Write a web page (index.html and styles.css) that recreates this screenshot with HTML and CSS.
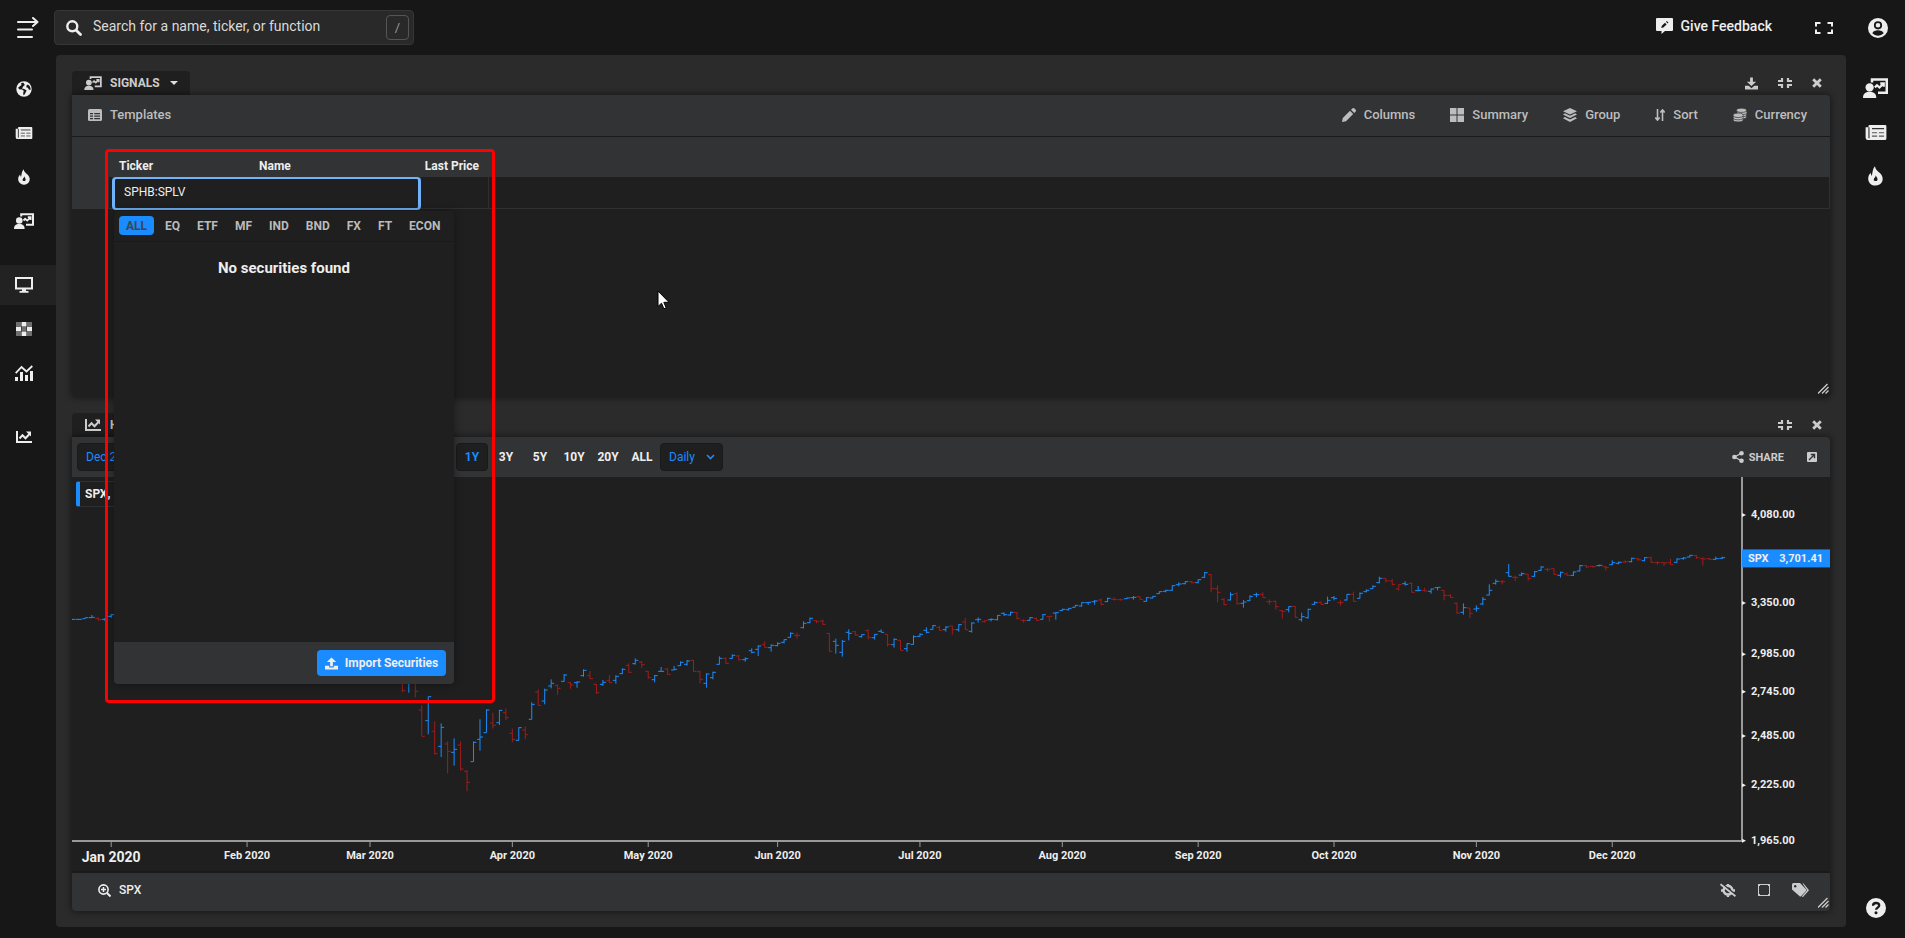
FILE: index.html
```html
<!DOCTYPE html>
<html lang="en">
<head>
    <meta charset="UTF-8">
    <meta name="viewport" content="width=device-width, initial-scale=1.0">
    <title>Signals</title>
    <link rel="stylesheet" href="styles.css">
</head>
<body>
    <svg class="sprite" aria-hidden="true">
        <symbol id="i-menu" viewBox="0 0 22 22">
            <path d="M1 5h18M1 12.500h14M1 20h14" fill="none" stroke="currentColor" stroke-width="2" stroke-linecap="round"/>
            <path d="M16 1l4.500 4L16 9" fill="none" stroke="currentColor" stroke-width="2" stroke-linecap="round" stroke-linejoin="round"/>
        </symbol>
        <symbol id="i-search" viewBox="0 0 16 16">
            <circle cx="6.300" cy="6.300" r="5" fill="none" stroke="currentColor" stroke-width="2.400"/>
            <path d="M10.200 10.200l4.300 4.300" stroke="currentColor" stroke-width="2.800" stroke-linecap="round"/>
        </symbol>
        <symbol id="i-globe" viewBox="0 0 16 16">
            <circle cx="8" cy="8" r="7.700" fill="currentColor"/>
            <path d="M7.200 1.400L4.800 2.600 5.600 4 4.200 5 2.200 6.400 3 8.200l3.200 .4 1.600 1.500-.6 1.600 .2 2.500 1.400-.9 1-2.300 .9-1.500-2.500-1.600-2.200-.5 1.300-2.100 1.600-1.300z" fill="#171717"/>
            <path d="M11.800 3.500l-1.500 1.300 .2 1.600 1.500 .3 .7 1.800 1.700 .5 .2-1.800-1-2.200z" fill="#171717"/>
        </symbol>
        <symbol id="i-news" viewBox="0 0 18 13">
            <path d="M3.500 0H17a1 1 0 0 1 1 1v11a1 1 0 0 1-1 1H2a2 2 0 0 1-2-2V2h2.500V1a1 1 0 0 1 1-1z" fill="currentColor"/>
            <path d="M2.900 2v9.500M5.500 3.200h10.500" stroke="#333" stroke-width="1" fill="none"/>
            <path d="M5.500 6.700h4.500M11.500 6.700h4.500M5.500 9.700h4.500M11.500 9.700h4.500" stroke="#555" stroke-width="1" fill="none"/>
        </symbol>
        <symbol id="i-flame" viewBox="0 0 14 18">
            <path d="M6.500 0c.4 3 2.600 4.500 4.800 6.500 3.500 3.300 3 8.300-.6 10.500-3.500 2-8.300 .8-9.900-2.700C-.6 11.200 .6 7.800 2.500 6c.1 1.500 .4 2.200 1.100 2.800C4.400 5.500 4.200 2.500 6.500 0z" fill="currentColor"/>
            <path d="M7.300 8.200c-.2 1.500-.9 2-1.500 2.800-.8 1-.5 2.400 .9 2.700 1.700 .3 2.700-1.200 2-2.700-.4-.9-1.100-1.600-1.400-2.800z" fill="#171717"/>
        </symbol>
        <symbol id="i-present" viewBox="0 0 20 16">
            <path d="M7.200 3.500V1.200H19v10.600h-7" fill="none" stroke="currentColor" stroke-width="2"/>
            <circle cx="5.300" cy="7.500" r="3.300" fill="currentColor"/>
            <path d="M0 16c0-3.200 1.600-5 5.300-5s5.300 1.800 5.300 5z" fill="currentColor"/>
            <path d="M9.500 7.500l1.700-1.700 2 1.800 3.200-3.200M13.800 4.200h2.800V7" fill="none" stroke="currentColor" stroke-width="1.800"/>
        </symbol>
        <symbol id="i-desktop" viewBox="0 0 18 16">
            <path d="M1 1h16v10.500H1z" fill="none" stroke="currentColor" stroke-width="2"/>
            <path d="M7 12h4v2h2.500v1.800h-9V14H7z" fill="currentColor"/>
        </symbol>
        <symbol id="i-grid" viewBox="0 0 16 14">
            <path d="M0 0h5v4.500H0zM11 0h5v4.500h-5zM0 9.500h5V14H0zM11 9.500h5V14h-5zM5.500 4.700h5v4.500h-5z" fill="#6f6f6f"/>
            <path d="M5.500 0h5v4.500h-5zM0 4.700h5v4.500H0zM11 4.700h5v4.500h-5zM5.500 9.500h5V14h-5z" fill="currentColor"/>
        </symbol>
        <symbol id="i-bars" viewBox="0 0 18 16">
            <path d="M0 12h3v4H0zM5 7h3v9H5zM10 10h3v6h-3zM15 6h3v10h-3z" fill="currentColor"/>
            <path d="M.7 8.200L6.500 2l5 4.500L17.300 1" fill="none" stroke="currentColor" stroke-width="1.800"/>
        </symbol>
        <symbol id="i-line" viewBox="0 0 16 12">
            <path d="M1 0v11h15" fill="none" stroke="currentColor" stroke-width="2"/>
            <path d="M3.500 7.500l3-3.200 3 3 4-4.300" fill="none" stroke="currentColor" stroke-width="2"/>
            <path d="M10 .6h5v5z" fill="currentColor"/>
        </symbol>
        <symbol id="i-feedback" viewBox="0 0 17 16">
            <path d="M1 0h15a1 1 0 0 1 1 1v11a1 1 0 0 1-1 1H9l-3.500 3v-3H1a1 1 0 0 1-1-1V1a1 1 0 0 1 1-1z" fill="currentColor"/>
            <path d="M5.300 10l.5-2.200 3.200-3 1.600 1.600-3.200 3zM10 3.800l.8-.8L12.400 4.600l-.8 .8z" fill="#171717"/>
        </symbol>
        <symbol id="i-expand" viewBox="0 0 18 12">
            <path d="M5.500 1H1v3.500M12.500 1H17v3.500M5.500 11H1V7.500M12.500 11H17V7.500" fill="none" stroke="currentColor" stroke-width="2"/>
        </symbol>
        <symbol id="i-user" viewBox="0 0 20 20">
            <circle cx="10" cy="10" r="10" fill="currentColor"/>
            <circle cx="10" cy="7.300" r="3.200" fill="none" stroke="#171717" stroke-width="1.800"/>
            <path d="M4.300 15.300c1-2.300 3-3 5.700-3s4.700 .7 5.700 3A7.700 7.700 0 0 1 10 17.700a7.700 7.700 0 0 1-5.700-2.400z" fill="#171717"/>
        </symbol>
        <symbol id="i-help" viewBox="0 0 20 20">
            <circle cx="10" cy="10" r="10" fill="currentColor"/>
            <path d="M7 7.700c0-1.600 1.200-2.700 3-2.700s3.200 1.100 3.200 2.600c0 2-3.100 2.100-3.100 4.200" fill="none" stroke="#171717" stroke-width="2.300"/>
            <circle cx="10" cy="14.800" r="1.500" fill="#171717"/>
        </symbol>
        <symbol id="i-download" viewBox="0 0 14 13">
            <path d="M5.500 0h3v4.500H12L7 9.300 2 4.500h3.500z" fill="currentColor"/>
            <path d="M0 9h4l3 2.500L10 9h4v4H0z" fill="currentColor"/>
        </symbol>
        <symbol id="i-upload" viewBox="0 0 14 13">
            <path d="M5.500 9.500h3V5H12L7 0 2 5h3.500z" fill="currentColor"/>
            <path d="M0 9h4.500v1.700h5V9H14v4H0z" fill="currentColor"/>
        </symbol>
        <symbol id="i-compress" viewBox="0 0 14 10">
            <path d="M4 0v3H0M10 0v3h4M4 10V7H0M10 10V7h4" fill="none" stroke="currentColor" stroke-width="2.200"/>
        </symbol>
        <symbol id="i-close" viewBox="0 0 10 10">
            <path d="M1.200 1.200l7.600 7.600M8.800 1.200L1.200 8.800" stroke="currentColor" stroke-width="2.800"/>
        </symbol>
        <symbol id="i-table" viewBox="0 0 14 12">
            <rect width="14" height="12" rx="1.500" fill="currentColor"/>
            <path d="M2 4h3v1.300H2zM6.200 4H12v1.300H6.200zM2 6.500h3v1.300H2zM6.200 6.500H12v1.300H6.200zM2 9h3v1.300H2zM6.200 9H12v1.300H6.200z" fill="#323335"/>
        </symbol>
        <symbol id="i-pencil" viewBox="0 0 14 14">
            <path d="M0 14l.8-4L8 2.800 11.200 6 4 13.200zM9 1.800L10.300 .5a1.500 1.500 0 0 1 2.100 0l1.100 1.100a1.500 1.500 0 0 1 0 2.100L12.200 5z" fill="currentColor"/>
        </symbol>
        <symbol id="i-blocks" viewBox="0 0 14 14">
            <path d="M0 0h6.500v6.500H0zM7.500 0H14v6.500H7.500zM0 7.500h6.500V14H0zM7.500 7.500H14V14H7.500z" fill="currentColor"/>
        </symbol>
        <symbol id="i-layers" viewBox="0 0 14 14">
            <path d="M7 0l7 3.200-7 3.200-7-3.200zM1.800 5.300L7 7.700l5.200-2.400L14 6.600 7 10 0 6.600zM1.800 9L7 11.400 12.200 9l1.800 1.300L7 14l-7-3.700z" fill="currentColor"/>
        </symbol>
        <symbol id="i-sort" viewBox="0 0 10 12">
            <path d="M2.500 0v11M.3 8.500l2.200 2.600 2.200-2.600M7.500 12V1M5.300 3.500L7.500 .9l2.200 2.600" fill="none" stroke="currentColor" stroke-width="1.600"/>
        </symbol>
        <symbol id="i-coins" viewBox="0 0 14 14">
            <g fill="currentColor" stroke="#323335" stroke-width=".7">
                <ellipse cx="8.500" cy="8.700" rx="5" ry="2.200"/>
                <ellipse cx="8.700" cy="6.500" rx="5" ry="2.200"/>
                <ellipse cx="9" cy="4.400" rx="5" ry="2.200"/>
                <ellipse cx="8.500" cy="2.300" rx="5" ry="2.100"/>
                <ellipse cx="5.200" cy="11.700" rx="5" ry="2.200"/>
                <ellipse cx="5.200" cy="9.600" rx="5" ry="2.200"/>
                <ellipse cx="5.200" cy="7.300" rx="5" ry="2.200"/>
            </g>
        </symbol>
        <symbol id="i-share" viewBox="0 0 12 12">
            <path d="M9.500 2.300L2.500 6l7 3.700" fill="none" stroke="currentColor" stroke-width="1.300"/>
            <circle cx="9.500" cy="2.300" r="2.300" fill="currentColor"/>
            <circle cx="2.400" cy="6" r="2.300" fill="currentColor"/>
            <circle cx="9.500" cy="9.700" r="2.300" fill="currentColor"/>
        </symbol>
        <symbol id="i-open" viewBox="0 0 10 10">
            <rect width="10" height="10" rx="1" fill="currentColor"/>
            <path d="M2 8l5-5M3.800 2.500h3.700v3.700" fill="none" stroke="#323335" stroke-width="1.400"/>
        </symbol>
        <symbol id="i-zoom" viewBox="0 0 13 13">
            <circle cx="5.500" cy="5.500" r="4.600" fill="none" stroke="currentColor" stroke-width="1.600"/>
            <path d="M5.500 3v5M3 5.500h5" stroke="currentColor" stroke-width="1.500"/>
            <path d="M9 9l3.500 3.500" stroke="currentColor" stroke-width="2"/>
        </symbol>
        <symbol id="i-hide" viewBox="0 0 16 14">
            <path d="M1 7.500h2.500C4 4.500 5.800 3 8 3s4 1.500 4.500 4.500H15M3.500 7.500C4 10 5.800 11.500 8 11.500s4-1.500 4.500-4M8 1v2M8 11.500V14" fill="none" stroke="currentColor" stroke-width="2.400"/>
            <path d="M1.500 .2l14 11.500" stroke="#323335" stroke-width="1.600"/>
            <path d="M.5 1.200l15 12" stroke="currentColor" stroke-width="1.800"/>
        </symbol>
        <symbol id="i-square" viewBox="0 0 12 12">
            <rect x=".5" y=".5" width="11" height="11" fill="none" stroke="currentColor"/>
            <path d="M0 0h2v2H0zM10 0h2v2h-2zM0 10h2v2H0zM10 10h2v2h-2z" fill="currentColor"/>
        </symbol>
        <symbol id="i-tags" viewBox="0 0 17 14">
            <path d="M10.500 .5h1L17 7.200 11 14l-1.200-.6L15.200 7.200z" fill="currentColor"/>
            <path d="M0 1.500A1.500 1.500 0 0 1 1.500 0H8l6 6.300a1.300 1.300 0 0 1 0 1.800l-4.700 5a1.300 1.300 0 0 1-1.900 0L0 6.500z" fill="currentColor"/>
            <circle cx="3.200" cy="3.200" r="1.200" fill="#323335"/>
        </symbol>
        <symbol id="i-grip" viewBox="0 0 11 11">
            <path d="M0 10.500L9.500 1M4 10.500L10.500 4M7.500 10.500l3-3" stroke="currentColor" stroke-width="1.300"/>
        </symbol>
        <symbol id="i-chevron" viewBox="0 0 9 6">
            <path d="M1 1l3.500 3.500L8 1" fill="none" stroke="currentColor" stroke-width="1.600"/>
        </symbol>
    </svg>

    <header class="topbar">
        <button class="icon-btn menu-btn" type="button" aria-label="Expand menu"><svg width="22" height="22"><use href="#i-menu"/></svg></button>
        <label class="search">
            <svg width="16" height="16"><use href="#i-search"/></svg>
            <input type="text" aria-label="Search" placeholder="Search for a name, ticker, or function">
            <kbd>/</kbd>
        </label>
        <button class="icon-btn feedback" type="button"><svg width="17" height="16"><use href="#i-feedback"/></svg>Give Feedback</button>
        <button class="icon-btn fullscreen" type="button" aria-label="Full screen"><svg width="18" height="12"><use href="#i-expand"/></svg></button>
        <button class="icon-btn account" type="button" aria-label="Account"><svg width="20" height="20"><use href="#i-user"/></svg></button>
    </header>

    <div class="layout">
        <nav class="sidebar">
            <a href="#" aria-label="World"><svg width="16" height="16"><use href="#i-globe"/></svg></a>
            <a href="#" aria-label="News"><svg width="18" height="12"><use href="#i-news"/></svg></a>
            <a href="#" aria-label="Trending"><svg width="12" height="16"><use href="#i-flame"/></svg></a>
            <a href="#" aria-label="Signals"><svg width="20" height="16"><use href="#i-present"/></svg></a>
            <a class="active group" href="#" aria-label="Dashboards"><svg width="18" height="16"><use href="#i-desktop"/></svg></a>
            <a href="#" aria-label="Heatmap"><svg width="16" height="14"><use href="#i-grid"/></svg></a>
            <a href="#" aria-label="Analytics"><svg width="18" height="16"><use href="#i-bars"/></svg></a>
            <a class="group" href="#" aria-label="Charts"><svg width="16" height="12"><use href="#i-line"/></svg></a>
        </nav>

        <main class="board">
            <section class="widget">
                <div class="widget-head">
                    <button class="tab" type="button"><svg width="18" height="14"><use href="#i-present"/></svg>SIGNALS<span class="caret"></span></button>
                    <div class="widget-actions">
                        <button class="icon-btn" type="button" aria-label="Download"><svg width="13" height="13"><use href="#i-download"/></svg></button>
                        <button class="icon-btn" type="button" aria-label="Minimize"><svg width="14" height="10"><use href="#i-compress"/></svg></button>
                        <button class="icon-btn" type="button" aria-label="Close"><svg width="10" height="10"><use href="#i-close"/></svg></button>
                    </div>
                </div>
                <div class="widget-body signals">
                    <div class="toolbar">
                        <button class="tool" type="button"><svg width="14" height="12"><use href="#i-table"/></svg>Templates</button>
                        <div class="tools">
                            <button class="tool" type="button"><svg width="14" height="14"><use href="#i-pencil"/></svg>Columns</button>
                            <button class="tool" type="button"><svg width="14" height="14"><use href="#i-blocks"/></svg>Summary</button>
                            <button class="tool" type="button"><svg width="14" height="14"><use href="#i-layers"/></svg>Group</button>
                            <button class="tool" type="button"><svg width="10" height="12"><use href="#i-sort"/></svg>Sort</button>
                            <button class="tool" type="button"><svg width="14" height="14"><use href="#i-coins"/></svg>Currency</button>
                        </div>
                    </div>
                    <table class="securities">
                        <colgroup><col class="c-gutter"><col class="c-ticker"><col class="c-name"><col class="c-price"><col></colgroup>
                        <thead>
                            <tr><th></th><th>Ticker</th><th>Name</th><th class="num">Last Price</th><th></th></tr>
                        </thead>
                        <tbody>
                            <tr>
                                <td class="gutter"></td>
                                <td colspan="2"><input class="ticker-input" type="text" aria-label="Ticker" value="SPHB:SPLV"></td>
                                <td></td>
                                <td></td>
                            </tr>
                        </tbody>
                    </table>
                    <svg class="grip" width="11" height="11"><use href="#i-grip"/></svg>

                    <div class="lookup">
                        <div class="filters">
                            <button class="active" type="button">ALL</button>
                            <button type="button">EQ</button>
                            <button type="button">ETF</button>
                            <button type="button">MF</button>
                            <button type="button">IND</button>
                            <button type="button">BND</button>
                            <button type="button">FX</button>
                            <button type="button">FT</button>
                            <button type="button">ECON</button>
                        </div>
                        <p class="empty">No securities found</p>
                        <div class="lookup-foot">
                            <button class="import" type="button"><svg width="13" height="13"><use href="#i-upload"/></svg>Import Securities</button>
                        </div>
                    </div>
                    <div class="highlight"></div>
                </div>
            </section>

            <section class="widget chart-widget">
                <div class="widget-head">
                    <button class="tab" type="button"><svg width="18" height="12"><use href="#i-line"/></svg>HISTORICAL</button>
                    <div class="widget-actions">
                        <button class="icon-btn" type="button" aria-label="Minimize"><svg width="14" height="10"><use href="#i-compress"/></svg></button>
                        <button class="icon-btn" type="button" aria-label="Close"><svg width="10" height="10"><use href="#i-close"/></svg></button>
                    </div>
                </div>
                <div class="widget-body chart-body">
                    <div class="toolbar ranges">
                        <button class="date-range" type="button">Dec 24, 2019 - Dec 24, 2020</button>
                        <button class="range active" type="button">1Y</button>
                        <button class="range" type="button">3Y</button>
                        <button class="range" type="button">5Y</button>
                        <button class="range" type="button">10Y</button>
                        <button class="range" type="button">20Y</button>
                        <button class="range" type="button">ALL</button>
                        <label class="interval">
                            <select aria-label="Interval"><option>Daily</option><option>Weekly</option><option>Monthly</option></select>
                            <svg width="9" height="6"><use href="#i-chevron"/></svg>
                        </label>
                        <button class="share" type="button"><svg width="12" height="12"><use href="#i-share"/></svg>SHARE</button>
                        <button class="icon-btn open" type="button" aria-label="Open"><svg width="10" height="10"><use href="#i-open"/></svg></button>
                    </div>
                    <div class="chart">
                        <svg id="chart" role="img" aria-label="SPX daily prices"></svg>
                        <div class="legend">SPX,</div>
                    </div>
                    <div class="chart-foot">
                        <button class="foot-symbol" type="button"><svg width="13" height="13"><use href="#i-zoom"/></svg>SPX</button>
                        <div class="foot-tools">
                            <button class="icon-btn" type="button" aria-label="Hide drawings"><svg width="16" height="14"><use href="#i-hide"/></svg></button>
                            <button class="icon-btn" type="button" aria-label="Select area"><svg width="12" height="12"><use href="#i-square"/></svg></button>
                            <button class="icon-btn" type="button" aria-label="Tags"><svg width="17" height="14"><use href="#i-tags"/></svg></button>
                        </div>
                    </div>
                    <svg class="grip" width="11" height="11"><use href="#i-grip"/></svg>
                </div>
            </section>
        </main>

        <aside class="rail">
            <a href="#" aria-label="Signals"><svg width="25" height="20"><use href="#i-present"/></svg></a>
            <a href="#" aria-label="News"><svg width="22" height="15"><use href="#i-news"/></svg></a>
            <a href="#" aria-label="Trending"><svg width="15" height="20"><use href="#i-flame"/></svg></a>
            <a class="help" href="#" aria-label="Help"><svg width="20" height="20"><use href="#i-help"/></svg></a>
        </aside>
    </div>

    <svg class="cursor" width="13" height="20" viewBox="0 0 13 20" aria-hidden="true">
        <path d="M1 1v15.500l3.500-3.300 2.400 5.600 2.300-1-2.400-5.500H12z" fill="#fff" stroke="#000"/>
    </svg>

    <script src="chart.js"></script>
</body>
</html>
```
FILE: styles.css
```css
* {
    box-sizing: border-box;
}

body {
    margin: 0;
    min-height: 100vh;
    display: flex;
    flex-direction: column;
    background: #171717;
    color: #eee;
    font-family: Roboto, "Liberation Sans", Arial, sans-serif;
    font-size: 12px;
}

button, input, select {
    font: inherit;
    color: inherit;
}

button {
    padding: 0;
    border: 0;
    background: none;
    cursor: pointer;
}

a {
    color: inherit;
}

svg {
    display: block;
    flex: none;
}

.sprite {
    position: absolute;
    width: 0;
    height: 0;
}

.icon-btn {
    display: flex;
    align-items: center;
    justify-content: center;
}

/* top bar */
.topbar {
    display: flex;
    align-items: center;
    height: 55px;
    padding: 0 17px;
}

.search {
    display: flex;
    align-items: center;
    width: 360px;
    height: 35px;
    margin-left: 15px;
    padding: 0 4px 0 11px;
    background: #292929;
    border: 1px solid #363636;
    border-radius: 4px;
}

    .search input {
        flex: 1;
        min-width: 0;
        padding: 0 0 4px 11px;
        border: 0;
        background: none;
        font-size: 14px;
        outline: none;
    }

        .search input::placeholder {
            color: #dadada;
            opacity: 1;
        }

    .search kbd {
        width: 23px;
        height: 25px;
        border: 1px solid #555;
        border-radius: 4px;
        color: #999;
        font: 13px/24px Roboto, sans-serif;
        text-align: center;
    }

.feedback {
    gap: 8px;
    margin-left: auto;
    padding-bottom: 4px;
    font-size: 14px;
    font-weight: 500;
}

.fullscreen {
    margin-left: 43px;
}

.account {
    margin-left: 35px;
}

/* page columns */
.layout {
    flex: 1;
    display: flex;
}

.sidebar {
    width: 56px;
    padding-top: 14px;
}

    .sidebar a {
        display: flex;
        align-items: center;
        justify-content: center;
        height: 40px;
        margin-bottom: 4px;
        padding-right: 8px;
    }

        .sidebar a.group {
            margin-top: 24px;
        }

        .sidebar a.active {
            background: #222;
        }

.rail {
    display: flex;
    flex-direction: column;
    align-items: center;
    gap: 4px;
    width: 59px;
    padding: 13px 0 10px;
}

    .rail a {
        display: flex;
        align-items: center;
        height: 40px;
    }

    .rail .help {
        margin-top: auto;
    }

.board {
    flex: 1;
    min-width: 0;
    display: flex;
    flex-direction: column;
    gap: 16px;
    margin-bottom: 11px;
    padding: 16px;
    background: #2b2b2b;
    border-radius: 4px;
}

/* widgets */
.widget-head {
    display: flex;
    justify-content: space-between;
    height: 24px;
}

.tab {
    display: flex;
    align-items: center;
    gap: 8px;
    padding: 0 12px;
    background: #1f1f1f;
    border-radius: 4px 4px 0 0;
    color: #ccc;
    font-weight: 700;
}

.caret {
    margin-left: 2px;
    border: 4px solid transparent;
    border-top-color: #ddd;
    border-bottom: 0;
}

.widget-actions {
    display: flex;
    gap: 20px;
    padding-right: 8px;
    color: #ccc;
}

    .widget-actions .icon-btn {
        min-width: 10px;
    }

.widget-body {
    position: relative;
    background: #1f1f1f;
    border-radius: 0 4px 4px 4px;
    box-shadow: 0 0 6px 1px rgba(0, 0, 0, 0.45);
}

.signals {
    height: 302px;
}

.toolbar {
    display: flex;
    align-items: center;
    height: 42px;
    background: #323335;
    border-radius: 0 4px 0 0;
}

.signals .toolbar {
    justify-content: space-between;
    padding: 0 23px 2px 16px;
    border-bottom: 1px solid #1a1a1a;
}

.tools {
    display: flex;
    gap: 35px;
}

.tool {
    display: flex;
    align-items: center;
    gap: 8px;
    color: #bdbdbd;
    font-size: 13px;
    font-weight: 500;
}

.securities {
    width: 100%;
    table-layout: fixed;
    border-collapse: separate;
    border-spacing: 0;
}

.c-gutter {
    width: 37px;
}

.c-ticker {
    width: 140px;
}

.c-name {
    width: 172px;
}

.c-price {
    width: 68px;
}

.securities th {
    height: 40px;
    padding: 0 10px 4px;
    background: #323335;
    text-align: left;
    vertical-align: bottom;
    white-space: nowrap;
}

    .securities th.num {
        padding-left: 0;
        text-align: right;
    }

.securities td {
    height: 32px;
    padding: 0;
    border: solid #303030;
    border-width: 0 1px 1px 0;
}

    .securities td.gutter {
        border: 0;
        background: #323335;
    }

.ticker-input {
    display: block;
    width: calc(100% - 2px);
    height: 33px;
    margin: 0 0 -2px 3px;
    padding: 0 9px 4px;
    background: #1f1f1f;
    border: 2px solid #70b3fb;
    border-width: 2px 3px;
    border-radius: 4px;
    outline: none;
}

.grip {
    position: absolute;
    right: 1px;
    bottom: 3px;
    color: #ccc;
}

/* ticker lookup */
.lookup {
    position: absolute;
    left: 42px;
    top: 116px;
    z-index: 2;
    display: flex;
    flex-direction: column;
    width: 340px;
    height: 473px;
    background: #1f1f1f;
    border-radius: 4px;
    box-shadow: 0 0 8px rgba(0, 0, 0, 0.4);
}

.filters {
    display: flex;
    gap: 1px;
    padding: 5px 5px 6px;
    border-bottom: 1px solid #191919;
}

    .filters button {
        flex: none;
        height: 19px;
        padding: 0 8px;
        color: #bbb;
        font-weight: 700;
    }

        .filters button.active {
            width: 35px;
            margin-right: 2px;
            padding: 0;
            background: #1a8cff;
            border-radius: 4px;
            color: #3a4654;
        }

.empty {
    flex: 1;
    margin: 0;
    padding-top: 17px;
    font-size: 15px;
    font-weight: 700;
    text-align: center;
}

.lookup-foot {
    display: flex;
    justify-content: flex-end;
    padding: 8px;
    background: #323335;
    border-radius: 0 0 4px 4px;
}

.import {
    display: flex;
    align-items: center;
    justify-content: center;
    gap: 7px;
    width: 129px;
    height: 26px;
    background: #1a8cff;
    border-radius: 4px;
    font-weight: 700;
}

.highlight {
    position: absolute;
    left: 33px;
    top: 54px;
    z-index: 3;
    width: 390px;
    height: 554px;
    border: 3px solid #f00;
    border-radius: 4px;
    pointer-events: none;
}

/* chart */
.chart-widget, .chart-body {
    flex: 1;
    display: flex;
    flex-direction: column;
}

.ranges {
    height: 40px;
    padding: 0 13px 0 5px;
}

.date-range, .range, .interval {
    height: 28px;
    border: 1px solid transparent;
    border-radius: 4px;
}

.date-range {
    width: 377px;
    margin-right: 2px;
    padding: 0 8px;
    text-align: left;
}

.date-range, .range.active, .interval {
    background: #1f1f1f;
    border-color: #1a1a1a;
    color: #1a8cff;
}

.range {
    width: 32px;
    margin-right: 2px;
    font-weight: 700;
}

.interval {
    display: flex;
    align-items: center;
    width: 63px;
    padding: 0 7px 0 8px;
}

    .interval select {
        flex: 1;
        min-width: 0;
        padding: 0;
        border: 0;
        background: none;
        appearance: none;
        outline: none;
    }

.share {
    display: flex;
    align-items: center;
    gap: 5px;
    margin-left: auto;
    color: #ccc;
    font-size: 11px;
    font-weight: 700;
}

.open {
    margin-left: 23px;
    color: #ccc;
}

.chart {
    position: relative;
    flex: 1;
    min-height: 300px;
}

    .chart > svg {
        position: absolute;
        width: 100%;
        height: 100%;
    }

    .chart text {
        fill: #eee;
        font-size: 11px;
        font-weight: 700;
    }

    .chart text.year {
        font-size: 14px;
    }

.up {
    stroke: #1a8cff;
}

.down {
    stroke: #a11c1c;
}

.axis {
    stroke: #999;
}

.tag {
    fill: #1a8cff;
}

.marker {
    fill: #eee;
}

.legend {
    position: absolute;
    left: 4px;
    top: 4px;
    width: 80px;
    padding: 0 5px;
    border: 1px solid #303030;
    border-left: 4px solid #1a8cff;
    border-radius: 3px;
    font-weight: 700;
    line-height: 24px;
}

.chart-foot {
    display: flex;
    align-items: center;
    justify-content: space-between;
    height: 40px;
    padding: 0 21px 4px 26px;
    background: #323335;
    border-top: 2px solid #1a1a1a;
    border-radius: 0 0 4px 4px;
}

.foot-symbol {
    display: flex;
    align-items: center;
    gap: 8px;
    font-weight: 500;
}

.foot-tools {
    display: flex;
    align-items: center;
    gap: 22px;
    color: #ccc;
}

/* mouse pointer, floats over everything */
.cursor {
    position: absolute;
    left: 657px;
    top: 290px;
    z-index: 4;
}
```
FILE: chart.js
```js
// SPX daily bars: direction, open, high, low, close
// values are chart units below the reference line, 3 units = 1px at full size
const series = [
    { start: -46, bars: [
        'u 238 237 240 238', 'u 238 237 240 238', 'u 236 233 236 233', 'u 233 225 234 232',
        'd 235 232 242 239', 'u 238 235 242 238', 'u 229 223 233 224'
    ] },
    { start: 5, bars: [
        'd 380 380 457 452', 'u 400 380 458 390', 'd 410 380 472 454', 'd 510 496 588 589', 'u 542 470 583 470',
        'd 574 544 644 641', 'u 619 550 651 562', 'd 612 604 700 634', 'u 637 595 677 628', 'd 615 604 692 687',
        'd 694 690 754 727', 'u 665 604 665 607', 'u 598 538 632 591', 'u 578 508 578 510', 'd 549 518 566 556',
        'u 548 510 555 511', 'd 518 505 540 533', 'd 580 566 607 598', 'u 601 562 601 563', 'd 570 559 598 584',
        'u 538 487 538 493', 'd 456 448 496 496', 'u 483 446 493 450', 'u 438 418 445 430', 'd 436 434 464 445',
        'u 424 402 425 405', 'd 428 426 446 435', 'u 428 424 443 426', 'u 407 388 410 391', 'd 407 393 417 416',
        'd 433 432 462 458', 'u 433 420 438 427', 'd 421 405 429 428', 'u 421 406 431 409', 'u 401 385 402 388',
        'd 376 370 398 397', 'u 371 355 374 361', 'd 366 363 383 374', 'd 394 393 416 413', 'u 419 405 427 407',
        'u 394 381 395 394', 'd 387 385 404 403', 'u 390 378 391 388', 'u 377 364 378 367', 'u 373 360 377 363',
        'd 361 360 395 394', 'd 395 392 430 418', 'u 430 400 443 402', 'u 413 395 418 397', 'u 373 349 374 355',
        'd 355 352 371 370', 'u 355 343 356 346', 'd 348 345 362 359', 'u 359 352 365 356', 'u 332 325 340 337',
        'u 328 316 348 318', 'd 314 304 323 322', 'u 323 313 335 316', 'u 317 307 319 310', 'u 307 298 310 299',
        'u 292 277 293 280', 'd 286 278 296 286', 'u 263 244 265 250', 'u 248 233 250 235', 'd 242 240 250 245',
        'd 243 239 255 253', 'd 280 280 334 334', 'u 304 296 341 316', 'u 337 300 350 304', 'u 277 268 301 280',
        'd 275 273 286 285', 'u 290 283 293 284', 'd 272 268 298 292', 'u 293 282 299 283', 'u 274 268 277 277',
        'd 283 283 320 313', 'u 314 295 323 298', 'd 301 301 331 331', 'u 326 310 335 311', 'u 313 286 314 290',
        'u 289 280 291 283', 'u 271 262 280 277', 'u 268 255 269 257', 'd 262 257 272 271', 'u 269 259 275 261',
        'd 258 257 284 269', 'u 269 252 275 254', 'd 246 234 270 269', 'u 274 247 278 249', 'u 239 232 248 238',
        'd 245 241 248 242', 'u 239 235 244 238', 'u 239 225 241 226', 'u 220 217 228 224', 'u 225 215 227 217',
        'd 218 216 238 235', 'd 241 238 248 242', 'u 241 231 242 233', 'd 235 232 242 241', 'u 238 222 239 224',
        'd 230 228 245 229', 'u 219 217 239 218', 'u 212 206 213 208', 'u 209 204 212 205', 'u 202 195 202 196',
        'u 198 187 200 188', 'u 188 186 195 187', 'u 185 180 194 183', 'd 180 175 196 193', 'u 185 173 186 175',
        'd 178 172 182 178', 'd 179 176 182 179', 'u 176 173 177 174', 'u 173 168 179 172', 'd 170 168 178 178',
        'u 184 172 185 173', 'u 174 168 175 169', 'u 161 154 161 155', 'u 154 149 157 151', 'u 151 136 152 137',
        'u 134 127 139 132', 'u 131 124 133 125', 'd 125 123 130 128', 'u 128 118 130 119', 'u 112 96 114 98',
        'd 104 103 157 146', 'd 146 136 187 157', 'd 178 174 196 194', 'u 180 157 181 164', 'd 161 157 194 191',
        'u 190 180 203 186', 'u 182 166 183 169', 'u 164 158 172 164', 'd 163 157 173 173', 'd 185 178 194 185',
        'd 184 182 209 200', 'd 212 210 236 214', 'u 209 199 217 200', 'd 199 198 233 232', 'u 239 218 245 230',
        'u 233 206 236 208', 'u 193 184 194 188', 'd 187 184 194 193', 'u 190 170 192 181', 'u 173 168 181 175',
        'd 188 181 197 188', 'u 180 162 181 163', 'd 163 155 185 184', 'u 175 157 176 160', 'u 155 148 157 151',
        'u 146 136 147 139', 'u 128 110 130 115', 'd 115 114 127 122', 'd 123 118 136 133', 'd 147 133 151 134',
        'u 131 124 137 133', 'd 130 127 158 157', 'u 152 138 154 151', 'd 151 143 154 153', 'u 154 146 161 147',
        'u 143 141 151 142', 'd 151 150 181 166', 'd 166 163 173 172', 'd 190 188 221 219', 'u 217 190 224 203',
        'd 204 204 234 220', 'u 207 196 215 205', 'u 192 171 195 178', 'u 165 133 166 151', 'u 130 118 134 124',
        'd 125 120 133 125', 'u 98 72 110 109', 'd 112 107 123 112', 'u 105 97 108 101', 'd 103 102 122 116',
        'u 109 93 110 95', 'u 91 79 93 81', 'd 88 83 95 88', 'd 86 85 104 103', 'u 106 95 113 97',
        'd 102 97 107 106', 'u 106 94 108 96', 'u 93 75 94 77', 'd 77 75 83 81', 'd 79 77 83 80',
        'u 77 74 79 76', 'd 80 78 92 83', 'u 74 61 75 68', 'u 70 64 73 67', 'd 66 61 69 65',
        'u 65 53 67 55', 'd 56 53 63 59', 'u 62 52 64 53', 'd 53 50 68 67', 'd 68 64 74 68',
        'd 68 66 78 69', 'd 68 56 75 74', 'u 67 55 68 57', 'u 56 51 59 54', 'u 51 45 52 46',
        'd 47 45 57 53', 'd 56 52 77 57', 'd 56 54 61 58', 'u 58 50 59 56', 'u 55 50 57 53'
    ] }
];

const months = [
    ['Jan', -40], ['Feb', -19], ['Mar', 0], ['Apr', 22], ['May', 43], ['Jun', 63],
    ['Jul', 85], ['Aug', 107], ['Sep', 128], ['Oct', 149], ['Nov', 171], ['Dec', 192]
];

const prices = [4080, 3350, 2985, 2745, 2485, 2225, 1965];

const AXIS_W = 88;
const AXIS_H = 30;

function money(value) {
    return value.toLocaleString('en-US', { minimumFractionDigits: 2 });
}

function draw() {
    const svg = document.getElementById('chart');
    const width = svg.parentNode.clientWidth;
    const height = svg.parentNode.clientHeight;
    const w = width - AXIS_W;
    const h = height - AXIS_H;
    const sx = w / 1670;
    const sy = h / 364;
    const x = i => (298 + 6.47 * i) * sx;
    const y = v => (63 + v / 3) * sy;
    const priceY = p => (38 + 445.8 * Math.log(4080 / p)) * sy;
    const paths = { u: '', d: '' };

    series.forEach(part => {
        part.bars.forEach((bar, n) => {
            const [dir, open, high, low, close] = bar.split(' ');
            const cx = x(part.start + n);
            paths[dir] += `M${cx} ${y(+high)}V${y(+low)}M${cx - 3} ${y(+open)}H${cx}M${cx} ${y(+close)}H${cx + 3}`;
        });
    });

    let out = `<path class="up" fill="none" d="${paths.u}"/><path class="down" fill="none" d="${paths.d}"/>`;
    out += `<path class="axis" stroke-width="2" d="M0 ${h}H${w}"/><path class="axis" stroke-width="2" d="M${w} 0V${h}"/>`;

    months.forEach(([name, i]) => {
        const first = name === 'Jan';
        out += `<path class="axis" d="M${x(i)} ${h}v6"/>`;
        out += `<text class="${first ? 'year' : ''}" text-anchor="middle" x="${x(i)}" y="${h + (first ? 21 : 18)}">${name} 2020</text>`;
    });

    prices.forEach(p => {
        const py = priceY(p);
        out += `<path class="marker" d="M${w} ${py - 2}l4 2-4 2z"/><text x="${w + 9}" y="${py + 3}">${money(p)}</text>`;
    });

    const last = priceY(3701.41);
    out += `<rect class="tag" x="${w}" y="${last - 9}" width="${AXIS_W}" height="18"/>`;
    out += `<text x="${w + 6}" y="${last + 4}">SPX</text><text text-anchor="end" x="${width - 7}" y="${last + 4}">${money(3701.41)}</text>`;

    svg.innerHTML = out;
}

draw();
window.addEventListener('resize', draw);
```
